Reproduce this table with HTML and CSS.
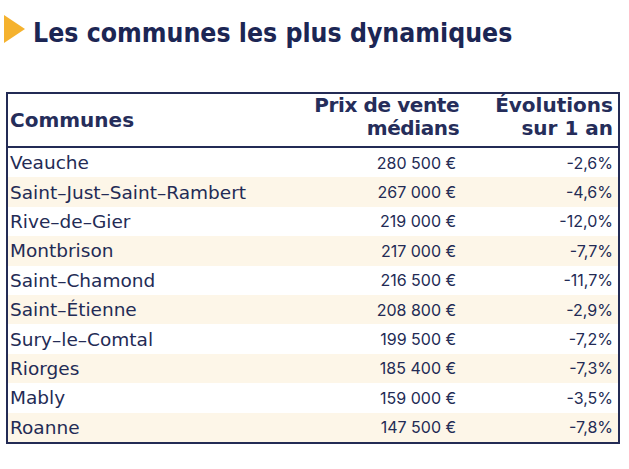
FILE: index.html
```html
<!DOCTYPE html>
<html lang="fr">
<head>
<meta charset="utf-8">
<title>Les communes les plus dynamiques</title>
<link rel="stylesheet" href="styles.css">
</head>
<body>
<div class="page">
  <h1 class="title">
    <svg class="arrow" width="21" height="28" viewBox="0 0 21 28"><polygon points="0,0 21,14 0,28" fill="#f5b22e"/></svg>
    <span class="title-text">Les communes les plus dynamiques</span>
  </h1>
  <table class="prices">
    <thead>
      <tr>
        <th class="name">Communes</th>
        <th class="num">Prix de vente<br>médians</th>
        <th class="pct">Évolutions<br>sur 1 an</th>
      </tr>
    </thead>
    <tbody>
      <tr><td class="name">Veauche</td><td class="num">280 500 €</td><td class="pct">-2,6%</td></tr>
      <tr><td class="name">Saint–Just–Saint–Rambert</td><td class="num">267 000 €</td><td class="pct">-4,6%</td></tr>
      <tr><td class="name">Rive–de–Gier</td><td class="num">219 000 €</td><td class="pct">-12,0%</td></tr>
      <tr><td class="name">Montbrison</td><td class="num">217 000 €</td><td class="pct">-7,7%</td></tr>
      <tr><td class="name">Saint–Chamond</td><td class="num">216 500 €</td><td class="pct">-11,7%</td></tr>
      <tr><td class="name">Saint–Étienne</td><td class="num">208 800 €</td><td class="pct">-2,9%</td></tr>
      <tr><td class="name">Sury–le–Comtal</td><td class="num">199 500 €</td><td class="pct">-7,2%</td></tr>
      <tr><td class="name">Riorges</td><td class="num">185 400 €</td><td class="pct">-7,3%</td></tr>
      <tr><td class="name">Mably</td><td class="num">159 000 €</td><td class="pct">-3,5%</td></tr>
      <tr><td class="name">Roanne</td><td class="num">147 500 €</td><td class="pct">-7,8%</td></tr>
    </tbody>
  </table>
</div>
</body>
</html>
```
FILE: styles.css
```css
html, body {
  margin: 0;
  padding: 0;
  background: #ffffff;
}
.page {
  padding: 15px 0 0 4px;
  color: #1f2753;
  font-family: "DejaVu Sans", Verdana, sans-serif;
}
.title {
  display: flex;
  align-items: flex-start;
  gap: 8px;
  margin: 0;
  font-family: "DejaVu Sans Condensed", "DejaVu Sans", sans-serif;
  font-stretch: condensed;
  font-size: 26.4px;
  font-weight: bold;
  line-height: 30px;
  color: #1c2654;
}
.title-text {
  margin-top: 3px;
}
.arrow {
  display: block;
  flex: none;
}
.prices {
  margin: 44px 0 0 2px;
  width: 614px;
  border-collapse: collapse;
  border: 2px solid #232b55;
}
.prices th {
  font-size: 20px;
  font-weight: bold;
  line-height: 23px;
  padding: 0 5px 6px 2px;
  height: 51px;
  box-sizing: border-box;
  color: #252d5a;
  vertical-align: bottom;
  border-bottom: 2px solid #232b55;
}
.prices th.name { text-align: left; vertical-align: middle; padding-bottom: 0; }
.prices th.num { text-align: right; padding-right: 15px; letter-spacing: -0.4px; }
.prices th.pct { text-align: right; }
.prices td {
  height: 29.4px;
  padding: 0 5px 0 2px;
  font-size: 18.5px;
  color: #232b55;
}
.prices tbody tr:nth-child(even) td { background: #fdf6e8; }
.prices td.num, .prices td.pct {
  text-align: right;
  font-family: Inter, Roboto, sans-serif;
  font-size: 16px;
}
.prices td.num { padding-right: 18px; }
```
